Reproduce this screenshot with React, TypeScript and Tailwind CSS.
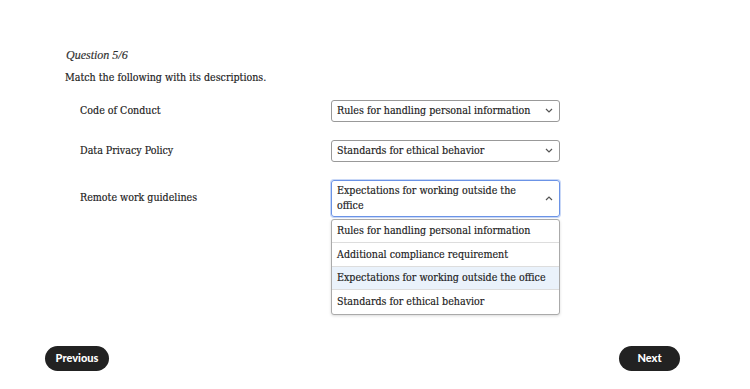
import React from "react";

const serif = "font-['DejaVu_Serif_Condensed','DejaVu_Serif',serif] [font-stretch:condensed] [-webkit-text-stroke:0.15px_#1a1a1a]";

const Chevron = ({ up }: { up?: boolean }) => (
  <svg width="8" height="5" viewBox="0 0 8 5" className="shrink-0">
    <path
      d={up ? "M1 4 L4 1 L7 4" : "M1 1 L4 4 L7 1"}
      fill="none"
      stroke="#555"
      strokeWidth="1.2"
    />
  </svg>
);

const options = [
  "Rules for handling personal information",
  "Additional compliance requirement",
  "Expectations for working outside the office",
  "Standards for ethical behavior",
];

const App: React.FC = () => {
  return (
    <div className={`w-[750px] h-[389px] bg-white text-[#1a1a1a] ${serif} relative`}>
      <div className="pt-[46px] pl-[66px]">
        <p className="font-['Liberation_Serif',serif] italic text-[12px] text-[#333]">Question 5/6</p>
        <p className="text-[10.6px] mt-[6px] -ml-[1px]">Match the following with its descriptions.</p>
        {/* rows */}
        <div className="mt-[14px] ml-[14px] flex flex-col">
          <div className="flex items-center h-[22px]">
            <span className="w-[251px] text-[10.6px]">Code of Conduct</span>
            <div className="w-[229px] h-[22px] border border-[#999] rounded-[3px] flex items-center justify-between pl-[5px] pr-[6px] text-[10.6px]">
              <span>Rules for handling personal information</span>
              <Chevron />
            </div>
          </div>
          <div className="flex items-center h-[22px] mt-[18px]">
            <span className="w-[251px] text-[10.6px]">Data Privacy Policy</span>
            <div className="w-[229px] h-[22px] border border-[#999] rounded-[3px] flex items-center justify-between pl-[5px] pr-[6px] text-[10.6px]">
              <span>Standards for ethical behavior</span>
              <Chevron />
            </div>
          </div>
          <div className="flex mt-[18px]">
            <span className="w-[251px] text-[10.6px] h-[37px] flex items-center">Remote work guidelines</span>
            <div className="relative">
              <div className="w-[229px] h-[37px] border border-[#6b93e6] rounded-[3px] flex items-center justify-between pl-[5px] pr-[6px] text-[10.6px] leading-[15px] shadow-[0_0_0_1px_#c9d8f7]">
                <span className="w-[190px]">Expectations for working outside the office</span>
                <Chevron up />
              </div>
              <div className="absolute top-[39px] left-0 w-[229px] bg-white border border-[#aaa] rounded-[3px] shadow-[0_1px_3px_rgba(0,0,0,0.15)] text-[10.6px]">
                {options.map((o, i) => (
                  <div
                    key={o}
                    className={`h-[23.5px] flex items-center pl-[5px] whitespace-nowrap ${i < 3 ? "border-b border-[#ddd]" : ""} ${i === 2 ? "bg-[#eaf2fb]" : ""}`}
                  >
                    {o}
                  </div>
                ))}
              </div>
            </div>
          </div>
        </div>
      </div>
      <div className="absolute left-[45px] right-[70px] top-[346px] flex justify-between font-['Lato',sans-serif] font-black text-[11px] text-white [-webkit-text-stroke:0]">
        <button className="w-[64px] h-[25px] rounded-full bg-[#222]">Previous</button>
        <button className="w-[61px] h-[25px] rounded-full bg-[#222]">Next</button>
      </div>
    </div>
  );
};

export default App;
